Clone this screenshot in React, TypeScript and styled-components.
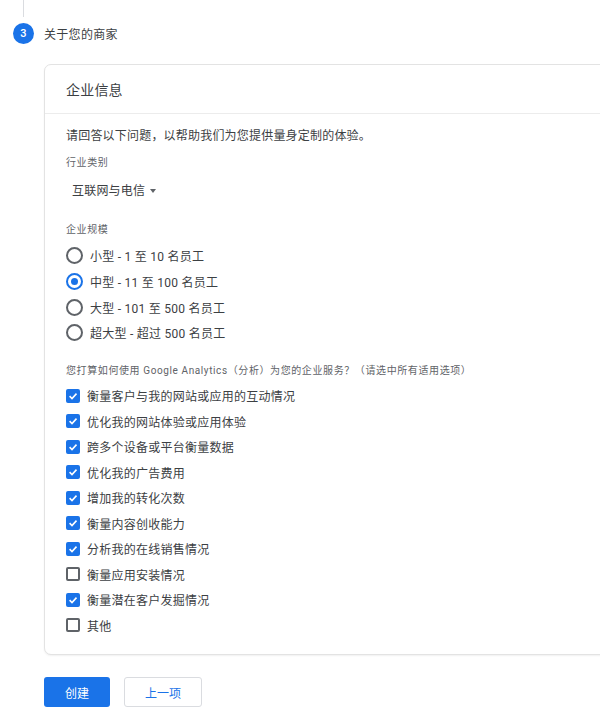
import {FC} from 'react';
import styled, {createGlobalStyle} from 'styled-components';

const GlobalStyle = createGlobalStyle`
    html, body {
        margin: 0;
        padding: 0;
        background: #ffffff;
        overflow: hidden;
    }
    body {
        font-family: Roboto, "Noto Sans CJK SC", sans-serif;
        color: #3c4043;
    }
`;

const sizes = [
    {text: '小型 - 1 至 10 名员工', checked: false},
    {text: '中型 - 11 至 100 名员工', checked: true},
    {text: '大型 - 101 至 500 名员工', checked: false},
    {text: '超大型 - 超过 500 名员工', checked: false},
];

const uses = [
    {text: '衡量客户与我的网站或应用的互动情况', checked: true},
    {text: '优化我的网站体验或应用体验', checked: true},
    {text: '跨多个设备或平台衡量数据', checked: true},
    {text: '优化我的广告费用', checked: true},
    {text: '增加我的转化次数', checked: true},
    {text: '衡量内容创收能力', checked: true},
    {text: '分析我的在线销售情况', checked: true},
    {text: '衡量应用安装情况', checked: false},
    {text: '衡量潜在客户发掘情况', checked: true},
    {text: '其他', checked: false},
];

const App:FC = () => <>
    <GlobalStyle/>
    <Page>
        <Connector/>
        <Step>
            <StepNumber>3</StepNumber>
            <StepTitle>关于您的商家</StepTitle>
        </Step>

        <Card>
            <CardHeader>企业信息</CardHeader>
            <CardBody>
                <Intro>请回答以下问题，以帮助我们为您提供量身定制的体验。</Intro>

                <FieldLabel>行业类别</FieldLabel>
                <Dropdown>
                    互联网与电信
                    <Caret/>
                </Dropdown>

                <FieldLabel $top={21}>企业规模</FieldLabel>
                <Options $top={5}>
                    {sizes.map(s =>
                        <RadioRow key={s.text}>
                            <Radio $checked={s.checked}/>
                            <OptionText>{s.text}</OptionText>
                        </RadioRow>
                    )}
                </Options>

                <FieldLabel $top={17}>您打算如何使用 Google Analytics（分析）为您的企业服务？（请选中所有适用选项）</FieldLabel>
                <Options $top={4}>
                    {uses.map(u =>
                        <CheckRow key={u.text}>
                            <Checkbox $checked={u.checked}>
                                {u.checked &&
                                    <svg width="10" height="10" viewBox="0 0 10 10">
                                        <path d="M1.6 5.2 L4 7.5 L8.5 2.6" fill="none" stroke="#fff" strokeWidth="1.6"/>
                                    </svg>
                                }
                            </Checkbox>
                            <OptionText>{u.text}</OptionText>
                        </CheckRow>
                    )}
                </Options>
            </CardBody>
        </Card>

        <Actions>
            <PrimaryButton>创建</PrimaryButton>
            <SecondaryButton>上一项</SecondaryButton>
        </Actions>
    </Page>
</>

const Page = styled.div`
    display: flex;
    flex-direction: column;
    padding-left: 13px;
    padding-bottom: 20px;
`;

const Connector = styled.div`
    width: 1px;
    height: 17px;
    margin-left: 10px;
    background: #dadce0;
`;

const Step = styled.div`
    display: flex;
    align-items: center;
    margin-top: 6px;
    height: 21px;
`;

const StepNumber = styled.div`
    width: 21px;
    height: 21px;
    border-radius: 50%;
    background: #1a73e8;
    color: #fff;
    font-size: 11px;
    font-weight: 500;
    display: flex;
    align-items: center;
    justify-content: center;
`;

const StepTitle = styled.div`
    margin-left: 10px;
    font-size: 12px;
    letter-spacing: 0.3px;
    color: #3c4043;
`;

const Card = styled.section`
    margin-top: 20px;
    margin-left: 31px;
    width: 600px;
    border: 1px solid #e3e3e3;
    border-radius: 7px;
    box-shadow: 0 1px 2px rgba(0,0,0,0.06);
    background: #fff;
`;

const CardHeader = styled.h2`
    margin: 0;
    height: 48px;
    padding-left: 21px;
    display: flex;
    align-items: center;
    font-size: 14px;
    font-weight: 400;
    letter-spacing: 0.2px;
    color: #3c4043;
    border-bottom: 1px solid #ececec;
`;

const CardBody = styled.div`
    padding: 12px 21px 16px;
    display: flex;
    flex-direction: column;
`;

const Intro = styled.p`
    margin: 0;
    font-size: 12px;
    line-height: 20px;
    letter-spacing: 0.2px;
    color: #3c4043;
`;

const FieldLabel = styled.div<{$top?: number}>`
    margin-top: ${p => p.$top ?? 9}px;
    font-size: 10px;
    line-height: 16px;
    letter-spacing: 0.6px;
    color: #5f6368;
`;

const Dropdown = styled.div`
    margin-top: 10px;
    margin-left: 6px;
    display: flex;
    align-items: center;
    gap: 5px;
    font-size: 12px;
    line-height: 20px;
    letter-spacing: 0.2px;
    color: #3c4043;
`;

const Caret = styled.span`
    width: 0;
    height: 0;
    border-left: 3.5px solid transparent;
    border-right: 3.5px solid transparent;
    border-top: 4px solid #5f6368;
`;

const Options = styled.div<{$top: number}>`
    margin-top: ${p => p.$top}px;
    display: flex;
    flex-direction: column;
`;

const RadioRow = styled.label`
    display: flex;
    align-items: center;
    height: 25.7px;
    gap: 7px;
`;

const CheckRow = styled.label`
    display: flex;
    align-items: center;
    height: 25.55px;
    gap: 7px;
`;

const Radio = styled.span<{$checked: boolean}>`
    box-sizing: border-box;
    width: 17px;
    height: 17px;
    border-radius: 50%;
    border: 2px solid ${p => p.$checked ? '#1a73e8' : '#5f6368'};
    display: flex;
    align-items: center;
    justify-content: center;
    &::after {
        content: '';
        width: 7px;
        height: 7px;
        border-radius: 50%;
        background: ${p => p.$checked ? '#1a73e8' : 'transparent'};
    }
`;

const Checkbox = styled.span<{$checked: boolean}>`
    box-sizing: border-box;
    width: 14px;
    height: 14px;
    border-radius: 2px;
    border: 2px solid ${p => p.$checked ? '#1a73e8' : '#5f6368'};
    background: ${p => p.$checked ? '#1a73e8' : '#fff'};
    display: flex;
    align-items: center;
    justify-content: center;
`;

const OptionText = styled.span`
    font-size: 12px;
    letter-spacing: 0.25px;
    color: #3c4043;
`;

const Actions = styled.div`
    display: flex;
    gap: 14px;
    margin-top: 22px;
    margin-left: 31px;
`;

const PrimaryButton = styled.button`
    width: 66px;
    height: 30px;
    border: none;
    border-radius: 3px;
    background: #1a73e8;
    color: #fff;
    font-family: inherit;
    font-size: 12px;
`;

const SecondaryButton = styled.button`
    width: 78px;
    height: 30px;
    border: 1px solid #dadce0;
    border-radius: 3px;
    background: #fff;
    color: #1a73e8;
    font-family: inherit;
    font-size: 12px;
`;

export default App;
